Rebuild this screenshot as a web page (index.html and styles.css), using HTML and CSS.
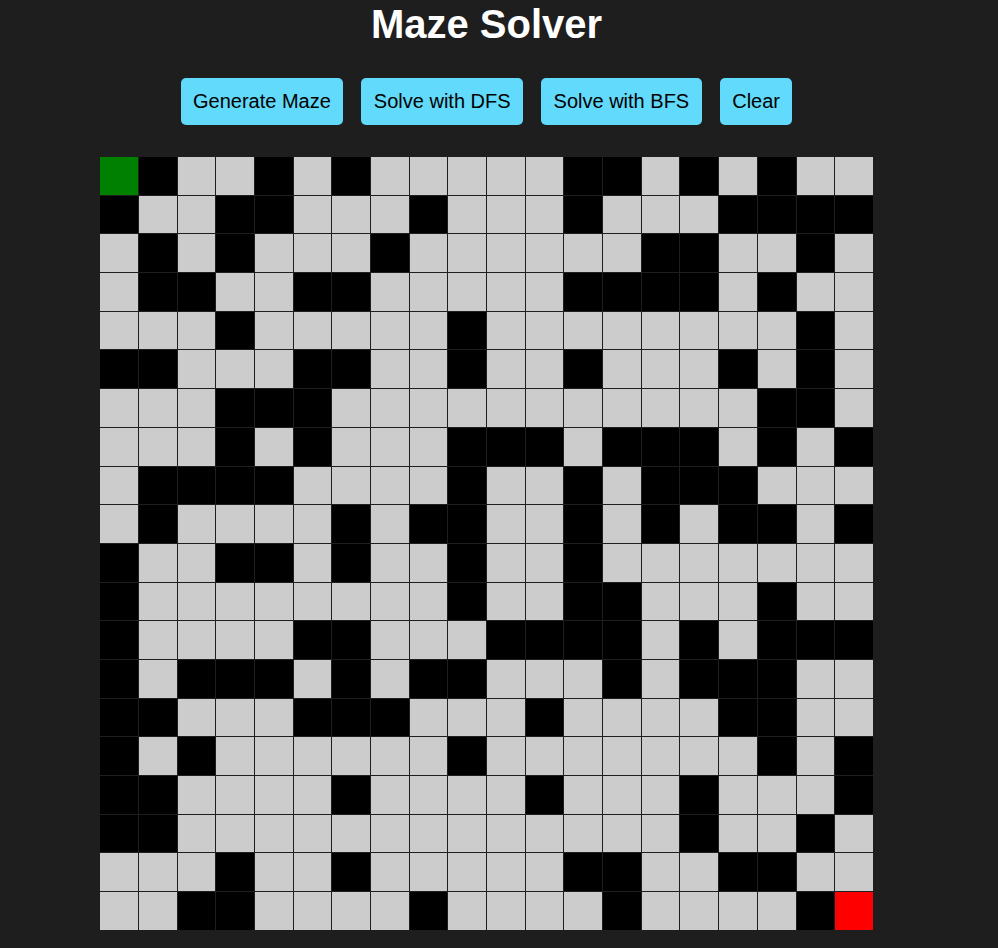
FILE: index.html
```html
<!DOCTYPE html>
<html lang="en">
<head>
<meta charset="utf-8">
<title>Maze Solver</title>
<link rel="stylesheet" href="styles.css">
</head>
<body>
<div class="app">
  <h1 class="title">Maze Solver</h1>
  <div class="controls">
    <button class="btn">Generate Maze</button>
    <button class="btn">Solve with DFS</button>
    <button class="btn">Solve with BFS</button>
    <button class="btn">Clear</button>
  </div>
  <div class="maze">
    <div class="cell start"></div><div class="cell wall"></div><div class="cell"></div><div class="cell"></div><div class="cell wall"></div><div class="cell"></div><div class="cell wall"></div><div class="cell"></div><div class="cell"></div><div class="cell"></div><div class="cell"></div><div class="cell"></div><div class="cell wall"></div><div class="cell wall"></div><div class="cell"></div><div class="cell wall"></div><div class="cell"></div><div class="cell wall"></div><div class="cell"></div><div class="cell"></div>
    <div class="cell wall"></div><div class="cell"></div><div class="cell"></div><div class="cell wall"></div><div class="cell wall"></div><div class="cell"></div><div class="cell"></div><div class="cell"></div><div class="cell wall"></div><div class="cell"></div><div class="cell"></div><div class="cell"></div><div class="cell wall"></div><div class="cell"></div><div class="cell"></div><div class="cell"></div><div class="cell wall"></div><div class="cell wall"></div><div class="cell wall"></div><div class="cell wall"></div>
    <div class="cell"></div><div class="cell wall"></div><div class="cell"></div><div class="cell wall"></div><div class="cell"></div><div class="cell"></div><div class="cell"></div><div class="cell wall"></div><div class="cell"></div><div class="cell"></div><div class="cell"></div><div class="cell"></div><div class="cell"></div><div class="cell"></div><div class="cell wall"></div><div class="cell wall"></div><div class="cell"></div><div class="cell"></div><div class="cell wall"></div><div class="cell"></div>
    <div class="cell"></div><div class="cell wall"></div><div class="cell wall"></div><div class="cell"></div><div class="cell"></div><div class="cell wall"></div><div class="cell wall"></div><div class="cell"></div><div class="cell"></div><div class="cell"></div><div class="cell"></div><div class="cell"></div><div class="cell wall"></div><div class="cell wall"></div><div class="cell wall"></div><div class="cell wall"></div><div class="cell"></div><div class="cell wall"></div><div class="cell"></div><div class="cell"></div>
    <div class="cell"></div><div class="cell"></div><div class="cell"></div><div class="cell wall"></div><div class="cell"></div><div class="cell"></div><div class="cell"></div><div class="cell"></div><div class="cell"></div><div class="cell wall"></div><div class="cell"></div><div class="cell"></div><div class="cell"></div><div class="cell"></div><div class="cell"></div><div class="cell"></div><div class="cell"></div><div class="cell"></div><div class="cell wall"></div><div class="cell"></div>
    <div class="cell wall"></div><div class="cell wall"></div><div class="cell"></div><div class="cell"></div><div class="cell"></div><div class="cell wall"></div><div class="cell wall"></div><div class="cell"></div><div class="cell"></div><div class="cell wall"></div><div class="cell"></div><div class="cell"></div><div class="cell wall"></div><div class="cell"></div><div class="cell"></div><div class="cell"></div><div class="cell wall"></div><div class="cell"></div><div class="cell wall"></div><div class="cell"></div>
    <div class="cell"></div><div class="cell"></div><div class="cell"></div><div class="cell wall"></div><div class="cell wall"></div><div class="cell wall"></div><div class="cell"></div><div class="cell"></div><div class="cell"></div><div class="cell"></div><div class="cell"></div><div class="cell"></div><div class="cell"></div><div class="cell"></div><div class="cell"></div><div class="cell"></div><div class="cell"></div><div class="cell wall"></div><div class="cell wall"></div><div class="cell"></div>
    <div class="cell"></div><div class="cell"></div><div class="cell"></div><div class="cell wall"></div><div class="cell"></div><div class="cell wall"></div><div class="cell"></div><div class="cell"></div><div class="cell"></div><div class="cell wall"></div><div class="cell wall"></div><div class="cell wall"></div><div class="cell"></div><div class="cell wall"></div><div class="cell wall"></div><div class="cell wall"></div><div class="cell"></div><div class="cell wall"></div><div class="cell"></div><div class="cell wall"></div>
    <div class="cell"></div><div class="cell wall"></div><div class="cell wall"></div><div class="cell wall"></div><div class="cell wall"></div><div class="cell"></div><div class="cell"></div><div class="cell"></div><div class="cell"></div><div class="cell wall"></div><div class="cell"></div><div class="cell"></div><div class="cell wall"></div><div class="cell"></div><div class="cell wall"></div><div class="cell wall"></div><div class="cell wall"></div><div class="cell"></div><div class="cell"></div><div class="cell"></div>
    <div class="cell"></div><div class="cell wall"></div><div class="cell"></div><div class="cell"></div><div class="cell"></div><div class="cell"></div><div class="cell wall"></div><div class="cell"></div><div class="cell wall"></div><div class="cell wall"></div><div class="cell"></div><div class="cell"></div><div class="cell wall"></div><div class="cell"></div><div class="cell wall"></div><div class="cell"></div><div class="cell wall"></div><div class="cell wall"></div><div class="cell"></div><div class="cell wall"></div>
    <div class="cell wall"></div><div class="cell"></div><div class="cell"></div><div class="cell wall"></div><div class="cell wall"></div><div class="cell"></div><div class="cell wall"></div><div class="cell"></div><div class="cell"></div><div class="cell wall"></div><div class="cell"></div><div class="cell"></div><div class="cell wall"></div><div class="cell"></div><div class="cell"></div><div class="cell"></div><div class="cell"></div><div class="cell"></div><div class="cell"></div><div class="cell"></div>
    <div class="cell wall"></div><div class="cell"></div><div class="cell"></div><div class="cell"></div><div class="cell"></div><div class="cell"></div><div class="cell"></div><div class="cell"></div><div class="cell"></div><div class="cell wall"></div><div class="cell"></div><div class="cell"></div><div class="cell wall"></div><div class="cell wall"></div><div class="cell"></div><div class="cell"></div><div class="cell"></div><div class="cell wall"></div><div class="cell"></div><div class="cell"></div>
    <div class="cell wall"></div><div class="cell"></div><div class="cell"></div><div class="cell"></div><div class="cell"></div><div class="cell wall"></div><div class="cell wall"></div><div class="cell"></div><div class="cell"></div><div class="cell"></div><div class="cell wall"></div><div class="cell wall"></div><div class="cell wall"></div><div class="cell wall"></div><div class="cell"></div><div class="cell wall"></div><div class="cell"></div><div class="cell wall"></div><div class="cell wall"></div><div class="cell wall"></div>
    <div class="cell wall"></div><div class="cell"></div><div class="cell wall"></div><div class="cell wall"></div><div class="cell wall"></div><div class="cell"></div><div class="cell wall"></div><div class="cell"></div><div class="cell wall"></div><div class="cell wall"></div><div class="cell"></div><div class="cell"></div><div class="cell"></div><div class="cell wall"></div><div class="cell"></div><div class="cell wall"></div><div class="cell wall"></div><div class="cell wall"></div><div class="cell"></div><div class="cell"></div>
    <div class="cell wall"></div><div class="cell wall"></div><div class="cell"></div><div class="cell"></div><div class="cell"></div><div class="cell wall"></div><div class="cell wall"></div><div class="cell wall"></div><div class="cell"></div><div class="cell"></div><div class="cell"></div><div class="cell wall"></div><div class="cell"></div><div class="cell"></div><div class="cell"></div><div class="cell"></div><div class="cell wall"></div><div class="cell wall"></div><div class="cell"></div><div class="cell"></div>
    <div class="cell wall"></div><div class="cell"></div><div class="cell wall"></div><div class="cell"></div><div class="cell"></div><div class="cell"></div><div class="cell"></div><div class="cell"></div><div class="cell"></div><div class="cell wall"></div><div class="cell"></div><div class="cell"></div><div class="cell"></div><div class="cell"></div><div class="cell"></div><div class="cell"></div><div class="cell"></div><div class="cell wall"></div><div class="cell"></div><div class="cell wall"></div>
    <div class="cell wall"></div><div class="cell wall"></div><div class="cell"></div><div class="cell"></div><div class="cell"></div><div class="cell"></div><div class="cell wall"></div><div class="cell"></div><div class="cell"></div><div class="cell"></div><div class="cell"></div><div class="cell wall"></div><div class="cell"></div><div class="cell"></div><div class="cell"></div><div class="cell wall"></div><div class="cell"></div><div class="cell"></div><div class="cell"></div><div class="cell wall"></div>
    <div class="cell wall"></div><div class="cell wall"></div><div class="cell"></div><div class="cell"></div><div class="cell"></div><div class="cell"></div><div class="cell"></div><div class="cell"></div><div class="cell"></div><div class="cell"></div><div class="cell"></div><div class="cell"></div><div class="cell"></div><div class="cell"></div><div class="cell"></div><div class="cell wall"></div><div class="cell"></div><div class="cell"></div><div class="cell wall"></div><div class="cell"></div>
    <div class="cell"></div><div class="cell"></div><div class="cell"></div><div class="cell wall"></div><div class="cell"></div><div class="cell"></div><div class="cell wall"></div><div class="cell"></div><div class="cell"></div><div class="cell"></div><div class="cell"></div><div class="cell"></div><div class="cell wall"></div><div class="cell wall"></div><div class="cell"></div><div class="cell"></div><div class="cell wall"></div><div class="cell wall"></div><div class="cell"></div><div class="cell"></div>
    <div class="cell"></div><div class="cell"></div><div class="cell wall"></div><div class="cell wall"></div><div class="cell"></div><div class="cell"></div><div class="cell"></div><div class="cell"></div><div class="cell wall"></div><div class="cell"></div><div class="cell"></div><div class="cell"></div><div class="cell"></div><div class="cell wall"></div><div class="cell"></div><div class="cell"></div><div class="cell"></div><div class="cell"></div><div class="cell wall"></div><div class="cell end"></div>
  </div>
</div>
</body>
</html>
```

FILE: styles.css
```css
html, body {
  margin: 0;
  padding: 0;
  background: #1e1e1e;
}

body {
  font-family: "Liberation Sans", Arial, sans-serif;
  color: #fff;
  height: 948px;
  overflow: hidden;
}

.app {
  width: 973px;
  display: flex;
  flex-direction: column;
  align-items: center;
}

.title {
  margin: 1px 0 31px;
  font-size: 40px;
  line-height: 46px;
  font-weight: bold;
  color: #fff;
}

.controls {
  display: flex;
  gap: 18px;
  margin-bottom: 32px;
}

.btn {
  font-family: "Liberation Sans", Arial, sans-serif;
  font-size: 20px;
  line-height: 23px;
  padding: 12px 12.5px;
  border: none;
  border-radius: 5px;
  background: #61dafb;
  color: #000;
  cursor: pointer;
}

.maze {
  display: grid;
  grid-template-columns: repeat(20, 37.7px);
  grid-auto-rows: 37.7px;
  gap: 1px;
}

.cell {
  background: #cccccc;
}

.cell.wall {
  background: #000;
}

.cell.start {
  background: #008000;
}

.cell.end {
  background: #ff0000;
}
```
